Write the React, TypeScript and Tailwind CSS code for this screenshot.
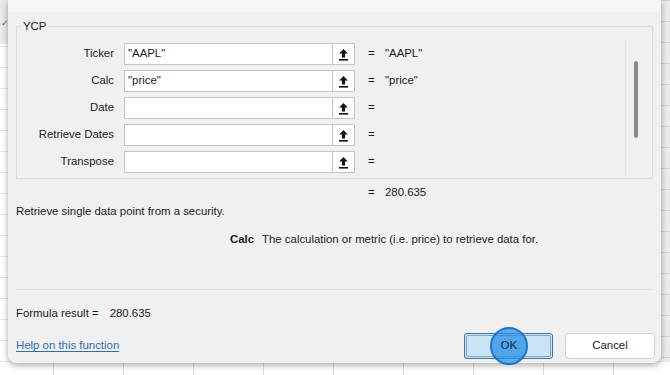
import React from "react";

const ROWS = [
  { label: "Ticker", value: '"AAPL"' },
  { label: "Calc", value: '"price"' },
  { label: "Date", value: "" },
  { label: "Retrieve Dates", value: "" },
  { label: "Transpose", value: "" },
];

// the little "collapse dialog" arrow next to every argument box
function PickIcon() {
  return (
    <svg width="11" height="13" viewBox="0 0 11 13" className="block">
      <path d="M5.5 1 L1.2 5.6 H3.9 V9.6 H7.1 V5.6 H9.8 Z" fill="#111" />
      <rect x="1" y="11" width="9" height="1.6" fill="#111" />
    </svg>
  );
}

function ArgRow({ label, value }: { label: string; value: string }) {
  return (
    <div className="flex items-center h-[22px]">
      <div className="w-[97px] text-right">{label}</div>
      <div className="ml-[10px] w-[209px] h-[22px] bg-white border border-[#c4c4c4] pl-[3px] flex items-center">
        {value}
      </div>
      <div className="-ml-px w-[23px] h-[22px] bg-white border border-[#c4c4c4] flex items-center justify-center">
        <PickIcon />
      </div>
      <div className="ml-[13px] w-[17px]">=</div>
      <div>{value}</div>
    </div>
  );
}

export default function App() {
  return (
    <div
      className="relative w-[670px] h-[375px] overflow-hidden bg-white bg-[linear-gradient(90deg,#dadada_1px,transparent_1px),linear-gradient(#e4e4e4_1px,transparent_1px)] bg-[size:70px_21px] bg-[position:53px_4px] text-[11.4px] text-[#1b1b1b]"
      style={{ fontFamily: '"Liberation Sans", Arial, sans-serif' }}
    >
      {/* excel bits peeking out on the left */}
      <div className="absolute left-0 top-0 w-[8px] h-[44px] bg-[#e9e9e9]" />
      <div className="absolute left-[1px] top-[17px] text-[9px] text-[#2f8a3e]">✓</div>
      <div className="absolute right-0 top-0 w-[9px] h-[362px] bg-[#eaeaea] bg-[linear-gradient(#d6d6d6_1px,transparent_1px)] bg-[size:9px_21px]" />

      {/* dialog */}
      <div className="relative ml-[8px] w-[653px] h-[363px] bg-[#f0f0f0] rounded-b-[8px] shadow-[0_2px_6px_rgba(0,0,0,0.35)] flex flex-col">
        <div className="h-[12px] bg-[#f3f6f5]" />

        {/* YCP group */}
        <div className="relative mt-[14px] mx-[8px] border border-[#dedede] flex">
          <span className="absolute left-[4px] -top-[9px] px-[2px] bg-[#f0f0f0] leading-[16px]">YCP</span>
          <div className="flex-1 flex flex-col gap-[5px] pt-[16px] pb-[5px]">
            {ROWS.map((r) => (
              <ArgRow key={r.label} label={r.label} value={r.value} />
            ))}
          </div>
          <div className="w-[27px] mt-[13px] mb-[2px] border-l border-[#e6e6e6] relative">
            <div className="absolute left-[8px] top-[21px] w-[4px] h-[77px] rounded-full bg-[#8a8a8a]" />
          </div>
        </div>

        <div className="flex mt-[5px] h-[17px] items-center">
          <div className="ml-[360px] w-[17px]">=</div>
          <div>280.635</div>
        </div>

        <div className="ml-[8px] mt-[2px] h-[17px] flex items-center">Retrieve single data point from a security.</div>

        <div className="mt-[11px] h-[17px] flex items-center">
          <span className="ml-[222px] font-bold">Calc</span>
          <span className="ml-[8px]">The calculation or metric (i.e. price) to retrieve data for.</span>
        </div>

        <div className="mx-[8px] mt-[41px] border-t border-[#e2e2e2]" />

        <div className="ml-[8px] mt-[15px] h-[17px] flex items-center">
          <span>Formula result =</span>
          <span className="ml-[11px]">280.635</span>
        </div>

        <div className="mt-[11px] flex items-center">
          <a className="ml-[8px] text-[#2a6fae] underline underline-offset-2">Help on this function</a>
          <div className="ml-auto flex gap-[12px] mr-[6px]">
            <div className="relative w-[89px] h-[26px] rounded-[3px] border border-[#3f76a6] bg-[#cce4f7] p-[1px]">
              <div className="w-full h-full rounded-[2px] border border-[#7ea3c4] flex items-center justify-center text-[#1b3a57]">
                OK
              </div>
              <div className="absolute left-[25px] top-[-7px] w-[38px] h-[38px] rounded-full bg-[#2b90e6]/75 border-2 border-[#1d78c8] flex items-center justify-center text-[#1b3f63]">
                OK
              </div>
            </div>
            <div className="w-[90px] h-[26px] rounded-[4px] border border-[#d2d2d2] bg-white flex items-center justify-center">
              Cancel
            </div>
          </div>
        </div>
      </div>
    </div>
  );
}
